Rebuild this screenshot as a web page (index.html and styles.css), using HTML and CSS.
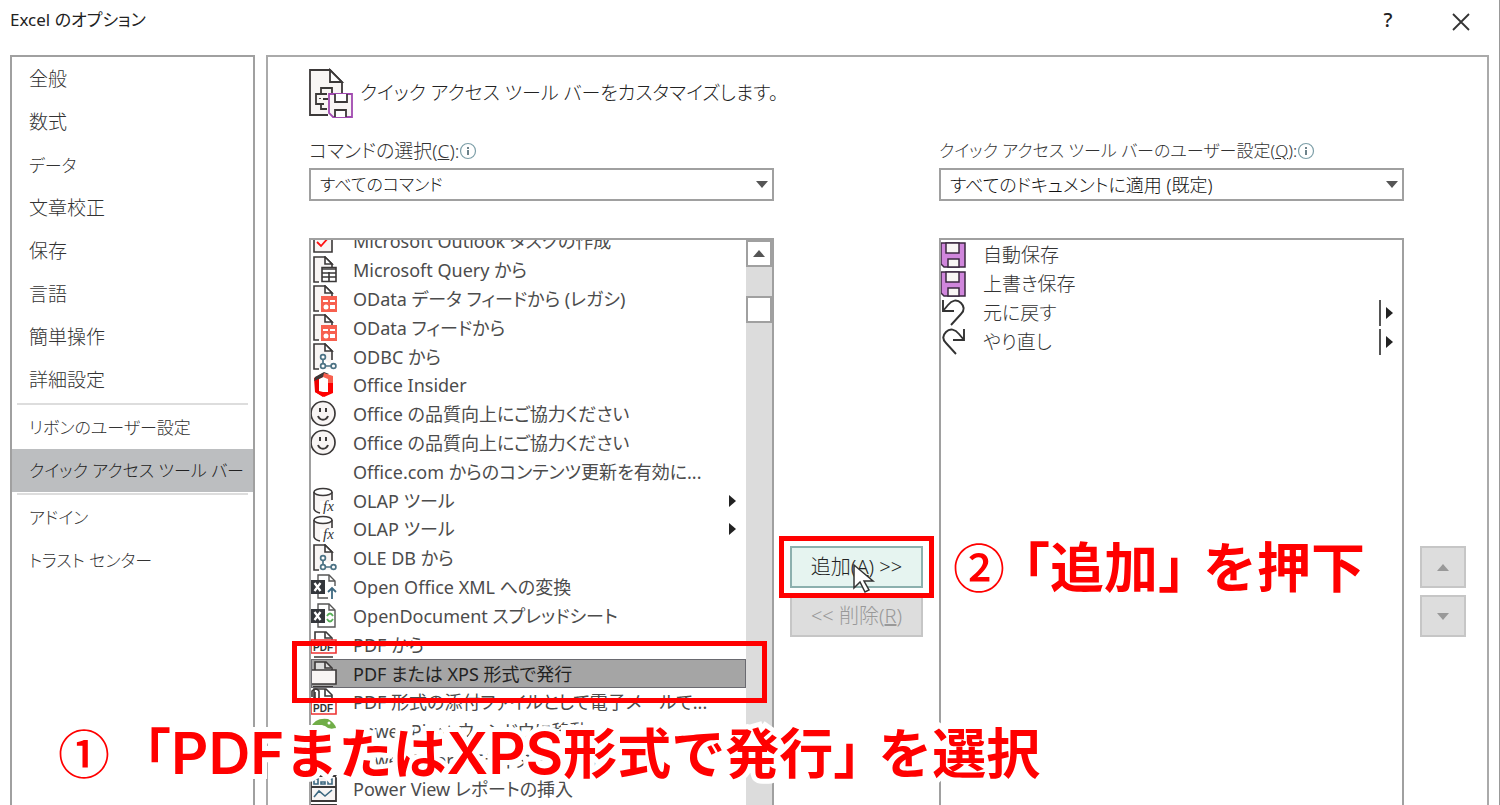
FILE: index.html
```
<!DOCTYPE html>
<html lang="ja">
<head>
<meta charset="utf-8">
<title>Excel のオプション</title>
<link rel="stylesheet" href="styles.css">
</head>
<body>
<svg class="defs" aria-hidden="true">
  <symbol id="doc" viewBox="0 0 28 28"><path d="M9 26H4V1h11l7 7v9" fill="#f8f5f4" stroke="#3b3838" stroke-width="1.6"/><path d="M15 1v7h7z" fill="#fff" stroke="#3b3838" stroke-width="1.6"/></symbol>
  <symbol id="task" viewBox="0 0 28 28"><path d="M4 3h18v22H4z" fill="#f8f5f4" stroke="#3b3838" stroke-width="1.6"/><path d="M7 15l4 4 8-9" fill="none" stroke="#f11" stroke-width="1.8"/></symbol>
  <symbol id="query" viewBox="0 0 28 28"><use href="#doc"/><path d="M12 11.500h14v14H12z" fill="#fff" stroke="#3b3838" stroke-width="1.600"/><path d="M12 13h14M12 17h14M12 21h14M19 16v9" stroke="#3b3838" stroke-width="1.600"/></symbol>
  <symbol id="odata" viewBox="0 0 28 28"><use href="#doc"/><path d="M11 11h16v16H11z" fill="#f7604f"/><path d="M13 15h5v2h-5zM20 15h5v2h-5zM20 20h5v4h-5z" fill="#fff"/><circle cx="16" cy="22" r="2.500" fill="#fff"/></symbol>
  <symbol id="odbc" viewBox="0 0 28 28"><use href="#doc"/><path d="M9 11h12v15H9z" fill="#f8f5f4"/><g fill="#fff" stroke="#4c7284" stroke-width="1.700"><path d="M13 16v7h11"/><circle cx="13" cy="14" r="2.400"/><circle cx="13" cy="23" r="2.400"/><circle cx="23.500" cy="23" r="2.400"/></g></symbol>
  <symbol id="insider" viewBox="0 0 28 28"><path d="M4 7l9-5v4l-4 2v12l4 1v5l-8-5z" fill="#e00"/><path d="M5 6l9-5 5 2-8 4-7 3z" fill="#3b3838"/><path d="M14 2l9 3v9l-5-1V8l-5-2z" fill="#f7604f"/><path d="M18 12h5v10l-9 4-9-5h13z" fill="#f00"/></symbol>
  <symbol id="smile" viewBox="0 0 28 28"><circle cx="13" cy="13.500" r="12" fill="#f8f5f4" stroke="#3b3838" stroke-width="1.700"/><path d="M10 8v4M16 8v4M8 16c2 5 8 5 10 0" fill="none" stroke="#3b3838" stroke-width="2"/></symbol>
  <symbol id="olap" viewBox="0 0 28 28"><path d="M4 5v17q1 3 6 4V14h12V5" fill="#f8f5f4"/><path d="M4 5v17q1 3 6 4M22 5v8" fill="none" stroke="#3b3838" stroke-width="1.600"/><ellipse cx="13" cy="5" rx="9" ry="3.500" fill="#fff" stroke="#3b3838" stroke-width="1.600"/><text x="13" y="24" class="fx">fx</text></symbol>
  <symbol id="xbase" viewBox="0 0 28 28"><path d="M8 8V2h11l6 6v17H8v-5" fill="#fff" stroke="#555" stroke-width="1.400"/><path d="M19 2v6h6" fill="none" stroke="#555" stroke-width="1.400"/><path d="M0 7h15v14H0z" fill="#33363b"/><path d="M4.500 10l6 8M10.500 10l-6 8" stroke="#fff" stroke-width="2.200"/></symbol>
  <symbol id="xml" viewBox="0 0 28 28"><use href="#xbase"/><path d="M18 13h9v14h-9z" fill="#fff"/><path d="M22 26V16M18 19l4-4 4 4" fill="none" stroke="#3d6880" stroke-width="1.800"/></symbol>
  <symbol id="ods" viewBox="0 0 28 28"><use href="#xbase"/><path d="M17 14q3-5 6 0M17 17q3 5 6 0" fill="none" stroke="#58b058" stroke-width="1.800"/></symbol>
  <symbol id="pdf" viewBox="0 0 28 28"><path d="M5 9V1h11l6 6v3M4 26h19" fill="#fff" stroke="#3b3838" stroke-width="1.600"/><path d="M15 1v6h6" fill="none" stroke="#3b3838" stroke-width="1.600"/><path d="M1 9h25v13H1z" fill="#fff" stroke="#e33" stroke-width="1.600"/><text x="3" y="20" class="pdf-text">PDF</text></symbol>
  <symbol id="pdf2" viewBox="0 0 28 28"><path d="M4 26V1h12l6 6v8" fill="#fff" stroke="#3b3838" stroke-width="1.600"/><path d="M1 12h25v14H1z" fill="#fff" stroke="#e33" stroke-width="1.600"/><path d="M15 1v7h7M2 9V3q4-4 7 0v7q-2 3-4 0V4" fill="none" stroke="#3b3838" stroke-width="1.600"/><text x="3" y="24" class="pdf-text">PDF</text></symbol>
  <symbol id="publish" viewBox="0 0 28 28"><path d="M5 10V2h11l6 6v3" fill="#ddd" stroke="#3b3838" stroke-width="1.600"/><path d="M15 2v6h6" fill="none" stroke="#3b3838" stroke-width="1.600"/><path d="M1 10h25v14H1z" fill="#f8f5f4" stroke="#3b3838" stroke-width="1.600"/><path d="M3 27h20" stroke="#3b3838" stroke-width="2"/></symbol>
  <symbol id="pivot" viewBox="0 0 28 28"><path d="M0 15Q2 0 18 2q7 4 8 9-7 2-11-2-8-3-13 6z" fill="#70ad47"/><circle cx="19" cy="6" r="1.500" fill="#fff"/></symbol>
  <symbol id="view" viewBox="0 0 28 28"><path d="M1 1h25v25H1zM1 12h25" fill="#f8f5f4" stroke="#3b3838" stroke-width="1.800"/><path d="M4 4h4v5H4zM18 4h4v5h-4zM11 7h4v2h-4zM4 22l5-6 6 5 7-6" fill="none" stroke="#3d6880" stroke-width="1.600"/></symbol>
  <symbol id="save" viewBox="0 0 28 28"><path d="M1 2h24v24H4l-3-3z" fill="#d086dc" stroke="#3b2840" stroke-width="1.500"/><path d="M6 2h13v10H6zM8 18h11v8H8z" fill="#f8f5f4" stroke="#3b2840" stroke-width="1.500"/></symbol>
  <symbol id="undo" viewBox="0 0 28 28"><path d="M3 1v11h11M3 12L8 6C12 1 17 0 21 4c4 4 3 8 0 11L11 26" fill="none" stroke="#333" stroke-width="1.900"/></symbol>
  <symbol id="redo" viewBox="0 0 28 28"><path d="M24 1v11H13M24 12l-5-6C15 1 10 0 6 4c-4 4-3 8 0 11l10 11" fill="none" stroke="#333" stroke-width="1.900"/></symbol>
  <symbol id="info" viewBox="0 0 18 18"><circle cx="9" cy="9" r="7.500" fill="#fff" stroke="#7d9fa8" stroke-width="1.200"/><path d="M9 5v2M9 8v5" stroke="#3f5b66" stroke-width="1.500"/></symbol>
</svg>

<header class="titlebar">
  <h1>Excel のオプション</h1>
  <button class="window-button" aria-label="ヘルプ">?</button>
  <button class="window-button" aria-label="閉じる"><svg class="close" viewBox="0 0 18 18"><path d="M1 1l16 16M17 1L1 17" stroke="#333" stroke-width="1.800"/></svg></button>
</header>

<main class="dialog">
  <nav class="sidebar">
    <a href="#">全般</a>
    <a href="#">数式</a>
    <a href="#" class="kana">データ</a>
    <a href="#">文章校正</a>
    <a href="#">保存</a>
    <a href="#">言語</a>
    <a href="#">簡単操作</a>
    <a href="#">詳細設定</a>
    <hr>
    <a href="#" class="kana">リボンのユーザー設定</a>
    <a href="#" class="kana active" aria-current="page">クイック アクセス ツール バー</a>
    <hr>
    <a href="#" class="kana">アドイン</a>
    <a href="#" class="kana">トラスト センター</a>
  </nav>

  <section class="panel">
    <div class="heading">
      <svg class="heading-icon" viewBox="0 0 46 50"><path d="M20 47H2V2h20l12 12v11" fill="#f8f5f4" stroke="#3b3838" stroke-width="1.800"/><path d="M22 2v12h12z" fill="#fff" stroke="#3b3838" stroke-width="1.800"/><path d="M13 25v-5h11v6M19 26H8v10h8M13 36v5h6M12 30v1M15 31h5" fill="none" stroke="#3b3838" stroke-width="1.800"/><path d="M21 26h23v23H25l-4-4z" fill="#f8f5f4" stroke="#a04ab0" stroke-width="1.800"/><path d="M27 26v8h12v-8M27 49v-7h11v7" fill="#fff" stroke="#3b3838" stroke-width="1.800"/></svg>
      <h2>クイック アクセス ツール バーをカスタマイズします。</h2>
    </div>

    <div class="columns">
      <div class="column">
        <div class="field-label"><label for="source">コマンドの選択(<u>C</u>):</label><svg class="info"><use href="#info"/></svg></div>
        <div class="select-wrap"><select id="source" class="kana"><option>すべてのコマンド</option></select></div>
        <div class="listbox">
          <ul class="commands" role="listbox" aria-label="コマンド">
            <li role="option"><svg><use href="#task"/></svg><span>Microsoft Outlook タスクの作成</span></li>
            <li role="option"><svg><use href="#query"/></svg><span>Microsoft Query から</span></li>
            <li role="option"><svg><use href="#odata"/></svg><span>OData データ フィードから (レガシ)</span></li>
            <li role="option"><svg><use href="#odata"/></svg><span>OData フィードから</span></li>
            <li role="option"><svg><use href="#odbc"/></svg><span>ODBC から</span></li>
            <li role="option"><svg><use href="#insider"/></svg><span>Office Insider</span></li>
            <li role="option"><svg><use href="#smile"/></svg><span>Office の品質向上にご協力ください</span></li>
            <li role="option"><svg><use href="#smile"/></svg><span>Office の品質向上にご協力ください</span></li>
            <li role="option"><svg></svg><span>Office.com からのコンテンツ更新を有効に...</span></li>
            <li role="option"><svg><use href="#olap"/></svg><span>OLAP ツール</span><i class="more"></i></li>
            <li role="option"><svg><use href="#olap"/></svg><span>OLAP ツール</span><i class="more"></i></li>
            <li role="option"><svg><use href="#odbc"/></svg><span>OLE DB から</span></li>
            <li role="option"><svg><use href="#xml"/></svg><span>Open Office XML への変換</span></li>
            <li role="option"><svg><use href="#ods"/></svg><span>OpenDocument スプレッドシート</span></li>
            <li role="option"><svg><use href="#pdf"/></svg><span>PDF から</span></li>
            <li role="option" aria-selected="true" class="selected"><svg><use href="#publish"/></svg><span>PDF または XPS 形式で発行</span></li>
            <li role="option"><svg><use href="#pdf2"/></svg><span>PDF 形式の添付ファイルとして電子メールで...</span></li>
            <li role="option"><svg><use href="#pivot"/></svg><span>Power Pivot ウィンドウに移動</span></li>
            <li role="option"><svg></svg><span>Power Query エディターの起動</span></li>
            <li role="option"><svg><use href="#view"/></svg><span>Power View レポートの挿入</span></li>
            <li role="option"><svg><use href="#view"/></svg></li>
          </ul>
          <div class="scrollbar">
            <button class="scroll-up" aria-label="上へスクロール"><i class="up"></i></button>
            <div class="thumb"></div>
          </div>
        </div>
      </div>

      <div class="transfer">
        <div class="add-wrap">
          <button class="add">追加(<u>A</u>) &gt;&gt;</button>
          <svg class="cursor" viewBox="0 0 24 30"><path d="M2 2v23l6-6 5 10 4-2-5-9h9z" fill="#fff" stroke="#333" stroke-width="1.500"/></svg>
          <div class="mark mark-add"></div>
          <p class="note note-two"><span class="step">②</span><span>「追加」</span><span>を押下</span></p>
        </div>
        <button class="remove" disabled>&lt;&lt; 削除(<u>R</u>)</button>
      </div>

      <div class="column">
        <div class="field-label kana"><label for="target">クイック アクセス ツール バーのユーザー設定(<u>Q</u>):</label><svg class="info"><use href="#info"/></svg></div>
        <div class="select-wrap"><select id="target"><option>すべてのドキュメントに適用 (既定)</option></select></div>
        <div class="listbox">
          <ul class="toolbar-items" role="listbox" aria-label="ツール バー">
            <li role="option"><svg><use href="#save"/></svg><span>自動保存</span></li>
            <li role="option"><svg><use href="#save"/></svg><span>上書き保存</span></li>
            <li role="option"><svg><use href="#undo"/></svg><span>元に戻す</span><i class="more split"></i></li>
            <li role="option"><svg><use href="#redo"/></svg><span>やり直し</span><i class="more split"></i></li>
          </ul>
        </div>
      </div>

      <div class="transfer">
        <button class="move" disabled aria-label="上へ"><i class="up"></i></button>
        <button class="move" disabled aria-label="下へ"><i class="down"></i></button>
      </div>
    </div>
  </section>
</main>
<div class="mark mark-row"></div>
<p class="note note-one"><span class="step">①</span><span>「<b>PDF</b>または<b>XPS</b>形式で発行」</span><span>を選択</span></p>
</body>
</html>
```
FILE: styles.css
```
* { box-sizing: border-box; }

body {
  margin: 0;
  height: 100vh;
  overflow: hidden;
  position: relative;
  display: flex;
  flex-direction: column;
  background: #fff;
  border-right: 1px solid #999;
  color: #333;
  font: 300 19px/28px "Noto Sans", "Noto Sans CJK JP", sans-serif;
  font-feature-settings: "palt";
}

button, select { font: inherit; color: inherit; font-feature-settings: inherit; }
h1, h2, p, ul { margin: 0; padding: 0; font-weight: inherit; }
ul { list-style: none; }
.defs { display: none; }

.titlebar {
  display: flex;
  align-items: center;
  height: 40px;
  flex: none;
  padding: 0 20px 0 10px;
  color: #222;
}
.titlebar h1 { flex: 1; font-size: 17px; font-weight: 400; }
.window-button {
  width: 36px;
  height: 36px;
  margin-left: 37px;
  border: 0;
  padding: 0;
  background: none;
  font-size: 20px;
  font-weight: 500;
}
.close { width: 18px; height: 18px; vertical-align: middle; }

.dialog {
  flex: 1;
  min-height: 0;
  display: flex;
  gap: 11px;
  margin-top: 15px;
  padding: 0 10px;
}

.sidebar {
  flex: 0 0 245px;
  border: 2px solid #a0a0a0;
  border-bottom: 0;
  padding-top: 1px;
  overflow: hidden;
}
.sidebar a {
  display: block;
  height: 43px;
  padding-left: 17px;
  line-height: 43px;
  color: #333;
  text-decoration: none;
  white-space: nowrap;
}
.sidebar .active { background: #bcbec0; color: #222; }
.sidebar hr { height: 2px; margin: 1px 5px; border: 0; background: #ddd; }

.kana { font-size: 17px; }

.panel {
  flex: 1;
  min-width: 0;
  display: flex;
  flex-direction: column;
  border: 2px solid #aaa;
  border-bottom: 0;
  padding: 9px 21px 0 41px;
}
.heading { display: flex; align-items: center; gap: 6px; height: 54px; }
.heading-icon { width: 46px; height: 50px; margin-left: -1px; }
.heading h2 { font-size: 19px; color: #222; }

.columns {
  flex: 1;
  min-height: 0;
  display: grid;
  grid-template-columns: minmax(0, 1fr) 133px minmax(0, 1fr) 46px;
  gap: 16px;
  padding-top: 13px;
}
.column { display: flex; flex-direction: column; min-height: 0; }
.field-label { display: flex; align-items: center; height: 35px; white-space: nowrap; }
.info { width: 18px; height: 18px; }

.select-wrap { position: relative; margin-bottom: 37px; }
.select-wrap::after {
  content: "";
  position: absolute;
  right: 6px;
  top: 13px;
  border: 6px solid transparent;
  border-top: 7px solid #555;
  border-bottom: 0;
}
select {
  display: block;
  width: 100%;
  height: 33px;
  appearance: none;
  border: 2px solid #a0a0a0;
  border-radius: 0;
  padding: 0 9px;
  background: #fff;
}
.select-wrap select { color: #111; font-size: 18px; }
.select-wrap .kana { font-size: 17px; }

.listbox {
  flex: 1;
  min-height: 0;
  display: flex;
  overflow: hidden;
  border: 2px solid #a0a0a0;
  border-bottom: 0;
}
.listbox ul { flex: 1; min-width: 0; }
.listbox li { display: flex; align-items: center; gap: 15px; white-space: nowrap; }
.listbox li svg { flex: none; width: 28px; height: 28px; margin-left: -1px; }
.listbox li span { flex: 1; }
.commands {
  display: grid;
  grid-auto-rows: 1fr;
  height: 605px;
  margin-top: -13px;
  font-size: 18px;
  font-weight: 400;
  color: #4c4c4c;
}
.commands .selected {
  background: #a5a5a5;
  color: #222;
  outline: 1px solid #6a6a70;
  outline-offset: -1px;
}
.commands .more { margin-right: 10px; }
.toolbar-items li { height: 29px; }
.toolbar-items .more { margin-right: 9px; }

.more {
  display: block;
  border: 6px solid transparent;
  border-left: 7px solid #222;
  border-right: 0;
}
.split { position: relative; }
.split::before {
  content: "";
  position: absolute;
  left: -14px;
  top: -13px;
  width: 2px;
  height: 26px;
  background: #555;
}
.up, .down { display: block; border: 6px solid transparent; margin: auto; width: 0; }
.up { border-top: 0; border-bottom: 7px solid #555; }
.down { border-bottom: 0; border-top: 7px solid #555; }

.scrollbar { width: 26px; flex: none; background: #dcdcdc; }
.scroll-up, .thumb {
  display: block;
  width: 26px;
  height: 27px;
  padding: 0;
  border: 2px solid #a0a0a0;
  background: #fff;
}
.thumb { margin-top: 29px; }

.transfer { display: flex; flex-direction: column; gap: 7px; padding-top: 413px; }
.transfer button {
  width: 100%;
  height: 42px;
  flex: none;
  border: 2px solid #c6c6c6;
  padding: 0;
  background: #ddd;
  color: #999;
  font-size: 20px;
}
.transfer .add { display: block; background: #e6f4f0; border-color: #8cb0ae; color: #222; }
.transfer .move .up { border-bottom-color: #999; }
.transfer .move .down { border-top-color: #999; }
.add-wrap { position: relative; }
.cursor { position: absolute; left: 62px; top: 17px; width: 24px; height: 30px; }

.mark { position: absolute; border: 5px solid #f00; }
.mark-add { inset: -10px -11px; }
.mark-row { left: 292px; top: 641px; width: 475px; height: 62px; }

.note {
  position: absolute;
  display: flex;
  align-items: baseline;
  gap: 18px;
  white-space: nowrap;
  color: #f00;
  font: 600 54px/60px "Inter", "Noto Sans CJK JP", sans-serif;
  font-feature-settings: "halt";
  -webkit-text-stroke: 10px #fff;
  paint-order: stroke fill;
}
.note b { font-size: 58px; font-weight: 600; }
.step { font: 500 52px/60px "Noto Sans CJK JP", sans-serif; }
.note-two { left: 163px; top: -10px; }
.note-one { left: 58px; top: 722px; }
.note-one .step { margin-right: 16px; }

.fx { font: italic 15px "Liberation Serif", serif; fill: #333; }
.pdf-text { font: 700 10px "Liberation Sans", sans-serif; fill: #333; }
```
